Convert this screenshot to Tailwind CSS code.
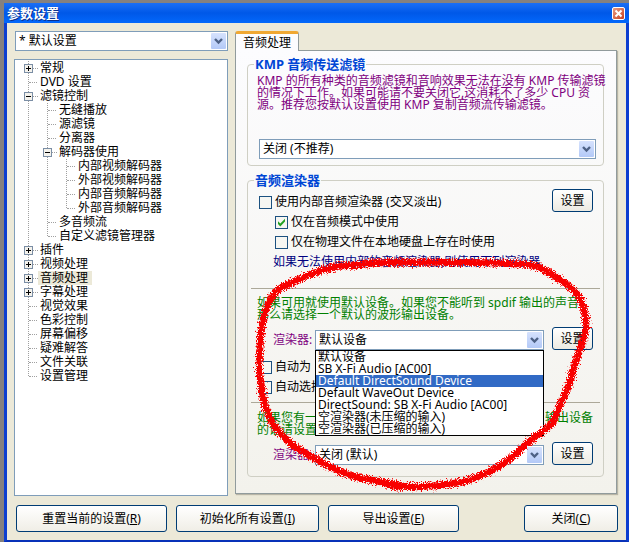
<!DOCTYPE html>
<html lang="zh-CN">
<head>
<meta charset="utf-8">
<title>参数设置</title>
<script src="https://cdn.jsdelivr.net/npm/@tailwindcss/browser@4"></script>
</head>
<body class="min-h-screen bg-[#85817f] font-['Noto_Sans','Noto_Sans_CJK_SC',sans-serif] text-[12px] leading-[14px] text-black">
<svg class="hidden" aria-hidden="true">
  <symbol id="chevron" viewBox="0 0 15 16"><path d="M4 6l3.5 3.5L11 6" fill="none" stroke="#4d6185" stroke-width="2.4"/></symbol>
  <symbol id="tick" viewBox="0 0 13 13"><path d="M3 5.2v2.8l2.3 2.4L10 5.6V2.8L5.3 7.5z" fill="#21a121"/></symbol>
</svg>
<div class="flex min-h-screen flex-col pt-[3px] pl-1">
<div class="relative flex flex-1 flex-col border-x-3 border-b-2 border-x-[#0c3ed0] border-b-[#0831b8] bg-[#ece9d8]">
  <header class="-mx-[3px] flex h-5 items-center justify-between bg-linear-to-b from-[#1b6ff5] via-[#0058e8] to-[#0468fb] pr-1 pl-[3px]">
    <h1 class="text-[13px] leading-5 font-bold text-white text-shadow-[1px_1px_0_#0b2f8c]">参数设置</h1>
    <button aria-label="关闭窗口" class="flex size-[13px] items-center justify-center rounded-[2px] border border-white bg-linear-to-br from-[#e89a80] to-[#c43c1c]">
      <svg class="size-[9px]" viewBox="0 0 9 9"><path d="M1.5 1.5l6 6M7.5 1.5l-6 6" stroke="#fff" stroke-width="2"/></svg>
    </button>
  </header>

  <main class="flex flex-1 flex-col pt-2 pr-[9px] pb-2 pl-[7px]">
    <div class="flex flex-1 gap-[7px]">
      <div class="flex w-[214px] shrink-0 flex-col gap-2">
        <div class="relative ml-px">
          <select aria-label="预设" class="block h-5 w-full appearance-none border border-[#7f9db9] bg-white pl-[3px] text-[12px] leading-[18px]"><option>* 默认设置</option></select>
          <svg class="pointer-events-none absolute top-[2px] right-[2px] h-4 w-[15px] rounded-[1px] bg-linear-to-b from-[#d6e2fd] to-[#b3c9f7]"><use href="#chevron"/></svg>
        </div>
        <nav aria-label="设置分类" class="flex-1 border border-[#7f9db9] bg-white pt-px pl-[13px]">
          <ul class="flex flex-col border-l border-dotted border-[#a0a0a0] whitespace-nowrap mb-[7px]">
            <li class="flex h-[14px] items-center"><button aria-label="展开 常规" class="-ml-[5px] size-[9px] border border-[#7b8ea5] bg-[#f4f2ec]"><svg class="size-[7px]" viewBox="0 0 7 7"><path d="M1 3.5h5M3.5 1v5" stroke="#000"/></svg></button><i class="mr-[2px] w-[5px] border-t border-dotted border-[#a0a0a0]"></i><a href="#">常规</a></li>
            <li class="flex h-[14px] items-center"><i class="mr-[3px] w-2 border-t border-dotted border-[#a0a0a0]"></i><a href="#">DVD 设置</a></li>
            <li>
              <div class="flex h-[14px] items-center"><button aria-label="折叠 滤镜控制" class="-ml-[5px] size-[9px] border border-[#7b8ea5] bg-[#f4f2ec]"><svg class="size-[7px]" viewBox="0 0 7 7"><path d="M1 3.5h5" stroke="#000"/></svg></button><i class="mr-[2px] w-[5px] border-t border-dotted border-[#a0a0a0]"></i><a href="#">滤镜控制</a></div>
              <div class="pb-[7px]">
              <ul class="ml-[18px] flex flex-col border-l border-dotted border-[#a0a0a0]">
                <li class="flex h-[14px] items-center"><i class="mr-[3px] w-2 border-t border-dotted border-[#a0a0a0]"></i><a href="#">无缝播放</a></li>
                <li class="flex h-[14px] items-center"><i class="mr-[3px] w-2 border-t border-dotted border-[#a0a0a0]"></i><a href="#">源滤镜</a></li>
                <li class="flex h-[14px] items-center"><i class="mr-[3px] w-2 border-t border-dotted border-[#a0a0a0]"></i><a href="#">分离器</a></li>
                <li>
                  <div class="flex h-[14px] items-center"><button aria-label="折叠 解码器使用" class="-ml-[5px] size-[9px] border border-[#7b8ea5] bg-[#f4f2ec]"><svg class="size-[7px]" viewBox="0 0 7 7"><path d="M1 3.5h5" stroke="#000"/></svg></button><i class="mr-[2px] w-[5px] border-t border-dotted border-[#a0a0a0]"></i><a href="#">解码器使用</a></div>
                  <div class="pb-[7px]">
                  <ul class="ml-[18px] flex flex-col border-l border-dotted border-[#a0a0a0]">
                    <li class="flex h-[14px] items-center"><i class="mr-[3px] w-2 border-t border-dotted border-[#a0a0a0]"></i><a href="#">内部视频解码器</a></li>
                    <li class="flex h-[14px] items-center"><i class="mr-[3px] w-2 border-t border-dotted border-[#a0a0a0]"></i><a href="#">外部视频解码器</a></li>
                    <li class="flex h-[14px] items-center"><i class="mr-[3px] w-2 border-t border-dotted border-[#a0a0a0]"></i><a href="#">内部音频解码器</a></li>
                    <li class="-mb-[7px] flex h-[14px] items-center"><i class="mr-[3px] w-2 border-t border-dotted border-[#a0a0a0]"></i><a href="#">外部音频解码器</a></li>
                  </ul>
                  </div>
                </li>
                <li class="flex h-[14px] items-center"><i class="mr-[3px] w-2 border-t border-dotted border-[#a0a0a0]"></i><a href="#">多音频流</a></li>
                <li class="-mb-[7px] flex h-[14px] items-center"><i class="mr-[3px] w-2 border-t border-dotted border-[#a0a0a0]"></i><a href="#">自定义滤镜管理器</a></li>
              </ul>
              </div>
            </li>
            <li class="flex h-[14px] items-center"><button aria-label="展开 插件" class="-ml-[5px] size-[9px] border border-[#7b8ea5] bg-[#f4f2ec]"><svg class="size-[7px]" viewBox="0 0 7 7"><path d="M1 3.5h5M3.5 1v5" stroke="#000"/></svg></button><i class="mr-[2px] w-[5px] border-t border-dotted border-[#a0a0a0]"></i><a href="#">插件</a></li>
            <li class="flex h-[14px] items-center"><button aria-label="展开 视频处理" class="-ml-[5px] size-[9px] border border-[#7b8ea5] bg-[#f4f2ec]"><svg class="size-[7px]" viewBox="0 0 7 7"><path d="M1 3.5h5M3.5 1v5" stroke="#000"/></svg></button><i class="mr-[2px] w-[5px] border-t border-dotted border-[#a0a0a0]"></i><a href="#">视频处理</a></li>
            <li class="flex h-[14px] items-center"><button aria-label="展开 音频处理" class="-ml-[5px] size-[9px] border border-[#7b8ea5] bg-[#f4f2ec]"><svg class="size-[7px]" viewBox="0 0 7 7"><path d="M1 3.5h5M3.5 1v5" stroke="#000"/></svg></button><i class="w-[5px] border-t border-dotted border-[#a0a0a0]"></i><a href="#" aria-current="page" class="h-[14px] bg-[#ece9d8] pr-1 pl-[2px]">音频处理</a></li>
            <li class="flex h-[14px] items-center"><button aria-label="展开 字幕处理" class="-ml-[5px] size-[9px] border border-[#7b8ea5] bg-[#f4f2ec]"><svg class="size-[7px]" viewBox="0 0 7 7"><path d="M1 3.5h5M3.5 1v5" stroke="#000"/></svg></button><i class="mr-[2px] w-[5px] border-t border-dotted border-[#a0a0a0]"></i><a href="#">字幕处理</a></li>
            <li class="flex h-[14px] items-center"><i class="mr-[3px] w-2 border-t border-dotted border-[#a0a0a0]"></i><a href="#">视觉效果</a></li>
            <li class="flex h-[14px] items-center"><i class="mr-[3px] w-2 border-t border-dotted border-[#a0a0a0]"></i><a href="#">色彩控制</a></li>
            <li class="flex h-[14px] items-center"><i class="mr-[3px] w-2 border-t border-dotted border-[#a0a0a0]"></i><a href="#">屏幕偏移</a></li>
            <li class="flex h-[14px] items-center"><i class="mr-[3px] w-2 border-t border-dotted border-[#a0a0a0]"></i><a href="#">疑难解答</a></li>
            <li class="flex h-[14px] items-center"><i class="mr-[3px] w-2 border-t border-dotted border-[#a0a0a0]"></i><a href="#">文件关联</a></li>
            <li class="-mb-[7px] flex h-[14px] items-center"><i class="mr-[3px] w-2 border-t border-dotted border-[#a0a0a0]"></i><a href="#">设置管理</a></li>
          </ul>
        </nav>
      </div>

      <section class="flex min-w-0 flex-1 flex-col pb-[2px]">
        <div role="tablist" class="z-10 -mb-px flex">
          <button role="tab" aria-selected="true" class="h-5 rounded-t-[3px] border-x border-t-3 border-x-[#919b9c] border-t-[#f0a833] bg-[#fcfcfe] px-[7px] leading-[14px]">音频处理</button>
        </div>
        <div role="tabpanel" class="flex flex-1 flex-col gap-[6px] border border-[#919b9c] bg-linear-to-b from-[#fcfcfe] to-[#f3f2ec] pt-[5px] pr-3 pb-4 pl-[11px] shadow-[1px_1px_1px_#b8b5a6]">

          <fieldset class="min-w-0 rounded-[4px] border border-[#cfcfc4] whitespace-nowrap">
            <legend class="ml-[6px] h-4 px-px text-[13px] leading-4 font-bold text-[#0046d5]">KMP 音频传送滤镜</legend>
            <p class="mt-[3px] pl-[9px] leading-3 text-[#800080]">KMP 的所有种类的音频滤镜和音响效果无法在没有 KMP 传输滤镜<br>的情况下工作。如果可能请不要关闭它,这消耗不了多少 CPU 资<br>源。推荐您按默认设置使用 KMP 复制音频流传输滤镜。</p>
            <div class="relative mt-7 mr-[7px] mb-[6px] ml-[11px]">
              <select aria-label="KMP 音频传送滤镜" class="block h-5 w-full appearance-none border border-[#7f9db9] bg-white pl-[3px] text-[12px] leading-[18px]"><option>关闭 (不推荐)</option></select>
              <svg class="pointer-events-none absolute top-[2px] right-[2px] h-4 w-[15px] rounded-[1px] bg-linear-to-b from-[#d6e2fd] to-[#b3c9f7]"><use href="#chevron"/></svg>
            </div>
          </fieldset>

          <fieldset class="min-w-0 rounded-[4px] border border-[#cfcfc4] pb-[11px] whitespace-nowrap">
            <legend class="ml-[6px] h-4 px-px text-[13px] leading-4 font-bold text-[#0046d5]">音频渲染器</legend>
            <div class="flex items-start justify-between pt-px pr-[10px] pl-[11px]">
              <div class="pt-[3px]">
                <label class="flex h-5 items-center gap-[3px]"><input type="checkbox" class="size-[13px] appearance-none border border-[#1c5180] bg-[#f6f6f2]">使用内部音频渲染器 (交叉淡出)</label>
                <label class="relative ml-4 flex h-5 items-center gap-[3px]"><input type="checkbox" checked class="peer size-[13px] appearance-none border border-[#1c5180] bg-[#f6f6f2]"><svg class="pointer-events-none invisible absolute left-0 size-[13px] peer-checked:visible"><use href="#tick"/></svg>仅在音频模式中使用</label>
                <label class="ml-4 flex h-5 items-center gap-[3px]"><input type="checkbox" class="size-[13px] appearance-none border border-[#1c5180] bg-[#f6f6f2]">仅在物理文件在本地硬盘上存在时使用</label>
              </div>
              <button class="h-[23px] w-[41px] rounded-[3px] border border-[#003c74] bg-linear-to-b from-white to-[#eceae2]">设置</button>
            </div>
            <p class="pl-[25px] leading-5 text-[#000080]">如果无法使用内部的音频渲染器,则使用下列渲染器.</p>
            <hr class="mt-4 mr-[3px] ml-[3px] border-[#aca899]">
            <p class="mt-2 pl-[9px] leading-3 text-[#008000]">如果可用就使用默认设备。如果您不能听到 spdif 输出的声音<br>那么请选择一个默认的波形输出设备。</p>
            <div class="mt-[6px] flex items-end gap-2 pr-[10px] pl-[25px]">
              <label for="renderer" class="w-[34px] leading-5 text-[#800080]">渲染器:</label>
              <div class="relative flex-1">
                <select id="renderer" class="block h-5 w-full appearance-none border border-[#7f9db9] bg-white pl-[3px] text-[12px] leading-[18px]"><option>默认设备</option></select>
                <svg class="pointer-events-none absolute top-[2px] right-[2px] h-4 w-[15px] rounded-[1px] bg-linear-to-b from-[#d6e2fd] to-[#b3c9f7]"><use href="#chevron"/></svg>
                <ul role="listbox" aria-label="渲染器" class="absolute inset-x-0 top-full z-10 border border-black bg-white leading-3">
                  <li role="option" class="h-3 px-[2px]">默认设备</li>
                  <li role="option" class="h-3 px-[2px]">SB X-Fi Audio [AC00]</li>
                  <li role="option" aria-selected="true" class="h-3 bg-[#316ac5] px-[2px] text-white">Default DirectSound Device</li>
                  <li role="option" class="h-3 px-[2px]">Default WaveOut Device</li>
                  <li role="option" class="h-3 px-[2px]">DirectSound: SB X-Fi Audio [AC00]</li>
                  <li role="option" class="h-3 px-[2px]">空渲染器(未压缩的输入)</li>
                  <li role="option" class="h-3 px-[2px]">空渲染器(已压缩的输入)</li>
                </ul>
              </div>
              <button class="h-[23px] w-[41px] rounded-[3px] border border-[#003c74] bg-linear-to-b from-white to-[#eceae2]">设置</button>
            </div>
            <div class="mt-[7px] pl-[11px]">
              <label class="flex h-5 items-center gap-[3px]"><input type="checkbox" class="size-[13px] appearance-none border border-[#1c5180] bg-[#f6f6f2]">自动为</label>
              <label class="flex h-5 items-center gap-[3px]"><input type="checkbox" class="size-[13px] appearance-none border border-[#1c5180] bg-[#f6f6f2]">自动选择</label>
            </div>
            <hr class="mt-[5px] mr-[3px] ml-[3px] border-[#aca899]">
            <p class="mt-[9px] flex justify-between pr-[10px] pl-[9px] leading-3 text-[#008000]"><span>如果您有一<br>的话请设置</span><span>输出设备</span></p>
            <div class="mt-[6px] flex items-end gap-2 pr-[10px] pl-[25px]">
              <label for="renderer2" class="w-[34px] leading-5 text-[#800080]">渲染器:</label>
              <div class="relative flex-1">
                <select id="renderer2" class="block h-5 w-full appearance-none border border-[#7f9db9] bg-white pl-[3px] text-[12px] leading-[18px]"><option>关闭 (默认)</option></select>
                <svg class="pointer-events-none absolute top-[2px] right-[2px] h-4 w-[15px] rounded-[1px] bg-linear-to-b from-[#d6e2fd] to-[#b3c9f7]"><use href="#chevron"/></svg>
              </div>
              <button class="h-[23px] w-[41px] rounded-[3px] border border-[#003c74] bg-linear-to-b from-white to-[#eceae2]">设置</button>
            </div>
          </fieldset>
        </div>
      </section>
    </div>

    <footer class="mt-[9px] -mr-px flex gap-[9px] pl-[2px]">
      <button class="h-[27px] w-[151px] rounded-[3px] border border-[#003c74] bg-linear-to-b from-white to-[#f0eee6]">重置当前的设置(<u>R</u>)</button>
      <button class="h-[27px] w-[143px] rounded-[3px] border border-[#003c74] bg-linear-to-b from-white to-[#f0eee6]">初始化所有设置(<u>I</u>)</button>
      <button class="h-[27px] w-[131px] rounded-[3px] border border-[#003c74] bg-linear-to-b from-white to-[#f0eee6]">导出设置(<u>E</u>)</button>
      <button class="ml-auto h-[27px] w-[94px] rounded-[3px] border border-[#003c74] bg-linear-to-b from-white to-[#f0eee6]">关闭(<u>C</u>)</button>
    </footer>
  </main>
</div>
</div>

<!-- hand-drawn red marker ring over the renderer settings -->
<svg class="pointer-events-none absolute top-0 left-0 z-20 h-[542px] w-[629px]" viewBox="0 0 629 542" fill="none" aria-hidden="true">
  <filter id="rough" x="-5%" y="-5%" width="110%" height="110%">
    <feTurbulence type="fractalNoise" baseFrequency="0.8" numOctaves="2" seed="4" result="n"/>
    <feDisplacementMap in="SourceGraphic" in2="n" scale="9" xChannelSelector="R" yChannelSelector="G"/>
  </filter>
  <g filter="url(#rough)" stroke="#f80000" stroke-width="7" stroke-linecap="round" stroke-linejoin="round">
    <path d="M326 269C342 264 352 266 363 264C385 261 408 263 430 262C455 263 476 262 496 263C513 264 528 263 539 267C547 271 550 273 556 277C565 283 571 286 576 293C581 299 583 304 584 310C586 316 586 321 586 327C585 333 584 338 582 343C579 353 575 363 572 373C571 383 567 391 562 400C558 408 557 416 552 423C545 431 536 435 529 442C522 447 518 453 512 457C506 462 499 467 492 470C483 475 473 479 462 482C451 484 441 486 430 486C418 487 405 487 393 485C381 481 368 480 357 477C345 474 333 469 323 463C313 458 306 453 297 448C290 444 285 438 280 433C275 428 271 421 268 413C264 406 263 398 262 390C260 380 259 370 259 360C260 350 260 342 261 333C262 325 263 319 265 313C267 305 270 299 275 293C280 287 286 285 293 282C301 278 308 275 317 272C325 269 333 267 340 266"/>
    <path d="M388 484L399 486" stroke-width="9"/>
  </g>
</svg>
</body>
</html>
